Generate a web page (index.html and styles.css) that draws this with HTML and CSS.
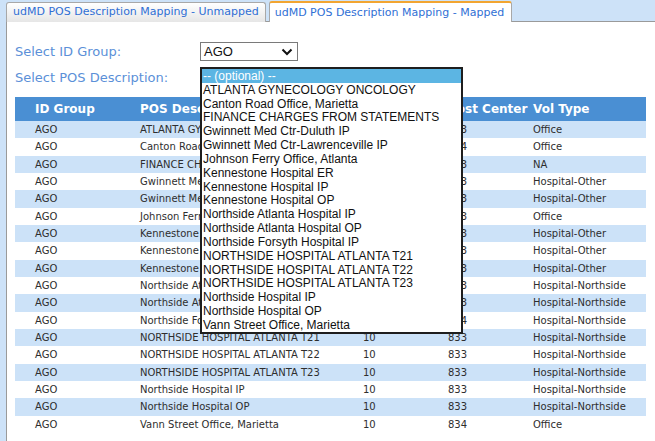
FILE: index.html
```html
<!DOCTYPE html>
<html>
<head>
<meta charset="utf-8">
<link rel="stylesheet" href="styles.css">
</head>
<body>
<div class="widget">
  <div class="tabbar">
    <div class="tab">udMD POS Description Mapping - Unmapped</div>
    <div class="tab active">udMD POS Description Mapping - Mapped</div>
  </div>
  <div class="panel">
    <div class="form">
      <div class="label row1">Select ID Group:</div>
      <div class="row1">
        <div class="select">
          <span>AGO</span>
          <svg class="chev" width="12" height="8" viewBox="0 0 12 8"><polyline points="1.5,1.5 6,6 10.5,1.5" fill="none" stroke="#111" stroke-width="2"/></svg>
        </div>
      </div>
      <div class="label row2">Select POS Description:</div>
      <div class="row2 anchor">
        <div class="listbox">
          <div class="opt sel">-- (optional) --</div>
          <div class="opt">ATLANTA GYNECOLOGY ONCOLOGY</div>
          <div class="opt">Canton Road Office, Marietta</div>
          <div class="opt">FINANCE CHARGES FROM STATEMENTS</div>
          <div class="opt">Gwinnett Med Ctr-Duluth IP</div>
          <div class="opt">Gwinnett Med Ctr-Lawrenceville IP</div>
          <div class="opt">Johnson Ferry Office, Atlanta</div>
          <div class="opt">Kennestone Hospital ER</div>
          <div class="opt">Kennestone Hospital IP</div>
          <div class="opt">Kennestone Hospital OP</div>
          <div class="opt">Northside Atlanta Hospital IP</div>
          <div class="opt">Northside Atlanta Hospital OP</div>
          <div class="opt">Northside Forsyth Hospital IP</div>
          <div class="opt">NORTHSIDE HOSPITAL ATLANTA T21</div>
          <div class="opt">NORTHSIDE HOSPITAL ATLANTA T22</div>
          <div class="opt">NORTHSIDE HOSPITAL ATLANTA T23</div>
          <div class="opt">Northside Hospital IP</div>
          <div class="opt">Northside Hospital OP</div>
          <div class="opt">Vann Street Office, Marietta</div>
        </div>
      </div>
    </div>
    <table class="grid">
      <colgroup>
        <col class="c1"><col class="c2"><col class="c3"><col class="c4"><col class="c5">
      </colgroup>
      <thead>
        <tr><th>ID Group</th><th>POS Description</th><th>Dept</th><th>Cost Center</th><th>Vol Type</th></tr>
      </thead>
      <tbody>
        <tr class="alt"><td>AGO</td><td>ATLANTA GYNECOLOGY ONCOLOGY</td><td>10</td><td>833</td><td>Office</td></tr>
        <tr><td>AGO</td><td>Canton Road Office, Marietta</td><td>10</td><td>834</td><td>Office</td></tr>
        <tr class="alt"><td>AGO</td><td>FINANCE CHARGES FROM STATEMENTS</td><td>10</td><td>833</td><td>NA</td></tr>
        <tr><td>AGO</td><td>Gwinnett Med Ctr-Duluth IP</td><td>10</td><td>833</td><td>Hospital-Other</td></tr>
        <tr class="alt"><td>AGO</td><td>Gwinnett Med Ctr-Lawrenceville IP</td><td>10</td><td>833</td><td>Hospital-Other</td></tr>
        <tr><td>AGO</td><td>Johnson Ferry Office, Atlanta</td><td>10</td><td>833</td><td>Office</td></tr>
        <tr class="alt"><td>AGO</td><td>Kennestone Hospital ER</td><td>10</td><td>833</td><td>Hospital-Other</td></tr>
        <tr><td>AGO</td><td>Kennestone Hospital IP</td><td>10</td><td>833</td><td>Hospital-Other</td></tr>
        <tr class="alt"><td>AGO</td><td>Kennestone Hospital OP</td><td>10</td><td>833</td><td>Hospital-Other</td></tr>
        <tr><td>AGO</td><td>Northside Atlanta Hospital IP</td><td>10</td><td>833</td><td>Hospital-Northside</td></tr>
        <tr class="alt"><td>AGO</td><td>Northside Atlanta Hospital OP</td><td>10</td><td>833</td><td>Hospital-Northside</td></tr>
        <tr><td>AGO</td><td>Northside Forsyth Hospital IP</td><td>10</td><td>834</td><td>Hospital-Northside</td></tr>
        <tr class="alt"><td>AGO</td><td>NORTHSIDE HOSPITAL ATLANTA T21</td><td>10</td><td>833</td><td>Hospital-Northside</td></tr>
        <tr><td>AGO</td><td>NORTHSIDE HOSPITAL ATLANTA T22</td><td>10</td><td>833</td><td>Hospital-Northside</td></tr>
        <tr class="alt"><td>AGO</td><td>NORTHSIDE HOSPITAL ATLANTA T23</td><td>10</td><td>833</td><td>Hospital-Northside</td></tr>
        <tr><td>AGO</td><td>Northside Hospital IP</td><td>10</td><td>833</td><td>Hospital-Northside</td></tr>
        <tr class="alt"><td>AGO</td><td>Northside Hospital OP</td><td>10</td><td>833</td><td>Hospital-Northside</td></tr>
        <tr><td>AGO</td><td>Vann Street Office, Marietta</td><td>10</td><td>834</td><td>Office</td></tr>
      </tbody>
    </table>
  </div>
</div>
</body>
</html>
```
FILE: styles.css
```css
html, body {
  margin: 0;
  padding: 0;
  height: 100%;
  overflow: hidden;
}
body {
  background: #cde2f8;
  font-family: "DejaVu Sans", Verdana, sans-serif;
}
.widget {
  margin-left: 6px;
  height: 100%;
  display: flex;
  flex-direction: column;
}
.tabbar {
  display: flex;
  align-items: flex-end;
  gap: 3px;
  height: 22px;
  border-bottom: 1px solid #9a9a9a;
  box-sizing: border-box;
  padding-top: 2px;
}
.tab {
  height: 20px;
  box-sizing: border-box;
  border: 1px solid #a8a8a8;
  border-bottom: none;
  border-radius: 3px 3px 0 0;
  background: linear-gradient(#ffffff, #e6e6e6);
  color: #2f6fd5;
  font-size: 11px;
  line-height: 18px;
  padding: 0 6px;
  white-space: nowrap;
  margin-bottom: -1px;
}
.tab.active {
  background: #fff;
  border-color: #a8a8a8;
  border-top: 2px solid #f2a531;
  height: 21px;
  line-height: 19px;
  padding: 0 6px 0 5px;
  width: 243px;
  box-sizing: border-box;
}
.panel {
  flex: 1;
  background: #fff;
  border-left: 1px solid #9a9a9a;
  padding: 20px 0 0 8px;
}
.form {
  display: grid;
  grid-template-columns: 185px 1fr;
  grid-template-rows: 19px 20px;
  row-gap: 6px;
  align-items: center;
}
.label {
  color: #5b90d8;
  font-size: 13px;
}
.anchor {
  position: relative;
  height: 20px;
}
.select {
  width: 98px;
  height: 19px;
  box-sizing: border-box;
  border: 1px solid #7a7a7a;
  display: flex;
  align-items: center;
  justify-content: space-between;
  padding: 0 4px 0 3px;
  font-family: "Liberation Sans", Arial, sans-serif;
  font-size: 13px;
  color: #111;
}
.chev {
  display: block;
}
.listbox {
  position: absolute;
  left: 0;
  top: 0;
  width: 263px;
  height: 267px;
  box-sizing: border-box;
  border: 2px solid #1e1e1e;
  background: #fff;
  z-index: 5;
  font-family: "Liberation Sans", Arial, sans-serif;
  font-size: 12px;
  color: #111;
  overflow: hidden;
}
.opt {
  height: 13.83px;
  line-height: 14px;
  padding-left: 1px;
  white-space: nowrap;
}
.opt.sel {
  background: #5cb5e3;
  color: #fff;
}
.grid {
  margin-top: 10px;
  border-collapse: collapse;
  table-layout: fixed;
  width: 631px;
  font-size: 10px;
  color: #2e2e2e;
}
.c1 { width: 105px; }
.c2 { width: 223px; }
.c3 { width: 85px; }
.c4 { width: 85px; }
.c5 { width: 133px; }
.grid th {
  background: #4a8fd3;
  color: #fff;
  font-size: 12px;
  font-weight: bold;
  text-align: left;
  height: 24px;
  padding: 0 0 0 20px;
  white-space: nowrap;
  overflow: visible;
}
.grid td {
  height: 17.33px;
  padding: 0 0 0 20px;
  white-space: nowrap;
  overflow: hidden;
}
.grid tr.alt td {
  background: #cce2f8;
}
```
